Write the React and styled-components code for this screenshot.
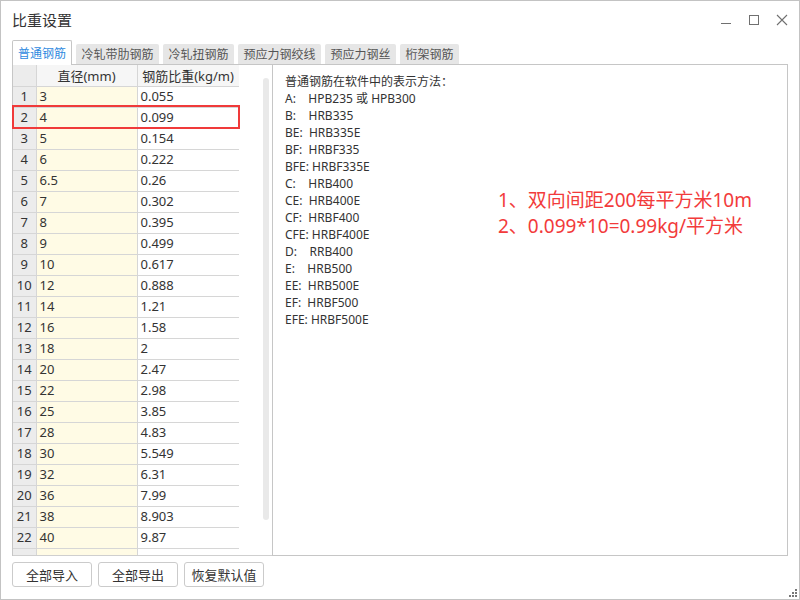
import React from 'react';
import styled, { createGlobalStyle } from 'styled-components';

const GlobalStyle = createGlobalStyle`
  html, body {
    margin: 0;
    padding: 0;
    background: #ffffff;
  }
  * {
    box-sizing: border-box;
  }
`;

const FONT = `"Noto Sans", "Noto Sans CJK SC", sans-serif`;

const Window = styled.div`
  position: relative;
  width: 800px;
  height: 600px;
  border: 1px solid #c3c3c3;
  background: #ffffff;
  font-family: ${FONT};
  color: #333333;
  display: flex;
  flex-direction: column;
`;

const TitleBar = styled.div`
  height: 39px;
  display: flex;
  align-items: center;
  justify-content: space-between;
  padding: 0 10px 2px 11px;
`;

const Title = styled.div`
  font-size: 15px;
  color: #333333;
`;

const Controls = styled.div`
  display: flex;
  align-items: center;
  gap: 13px;
`;

const CtrlBtn = styled.div`
  width: 15px;
  height: 15px;
  display: flex;
  align-items: center;
  justify-content: center;
  color: #707070;
`;

const Body = styled.div`
  flex: 1;
  display: flex;
  flex-direction: column;
  padding: 0 11px;
`;

const TabRow = styled.div`
  height: 24px;
  display: flex;
  align-items: flex-end;
  gap: 4px;
`;

const Tab = styled.div`
  height: ${(p) => (p.$active ? '25px' : '20px')};
  margin-bottom: ${(p) => (p.$active ? '-1px' : '0')};
  padding: 0 ${(p) => (p.$active ? '5px' : '5.5px')};
  display: flex;
  align-items: center;
  font-size: 12px;
  white-space: nowrap;
  position: relative;
  z-index: ${(p) => (p.$active ? 2 : 1)};
  color: ${(p) => (p.$active ? '#2f8ae0' : '#555555')};
  background: ${(p) => (p.$active ? '#ffffff' : '#e6e6e6')};
  border: ${(p) => (p.$active ? '1px solid #c6c6c6' : 'none')};
  border-bottom: none;
  border-radius: 2px 2px 0 0;
`;

const Panel = styled.div`
  position: relative;
  height: 492px;
  border: 1px solid #c6c6c6;
  display: flex;
`;

const LeftPane = styled.div`
  width: 259px;
  display: flex;
  border-bottom: 1px solid #cfcfcf;
  margin-bottom: -1px;
  overflow: hidden;
`;

const TableWrap = styled.div`
  width: 226px;
  height: 100%;
  overflow: hidden;
`;

const Grid = styled.table`
  border-collapse: collapse;
  table-layout: fixed;
  width: 226px;
  font-size: 13px;
  color: #333333;
`;

const Th = styled.th`
  height: 21px;
  padding: 0;
  font-weight: normal;
  text-align: center;
  border: 1px solid #d6d6d6;
  border-top: none;
  background: ${(p) => (p.$num ? '#ececec' : '#f6f6f6')};
  &:first-child {
    border-left: none;
  }
`;

const Td = styled.td`
  height: 21px;
  padding: 0 0 0 ${(p) => (p.$num ? '0' : '3px')};
  line-height: 19px;
  text-align: ${(p) => (p.$num ? 'center' : 'left')};
  border: 1px solid #d6d6d6;
  white-space: nowrap;
  background: ${(p) =>
    p.$num ? '#ececec' : p.$yellow ? '#fffbe5' : '#ffffff'};
  &:first-child {
    border-left: none;
  }
`;

const ScrollTrack = styled.div`
  width: 6px;
  height: 442px;
  margin: 13px 3px 0 auto;
  border-radius: 3px;
  background: #e9e9e9;
`;

const RightPane = styled.div`
  flex: 1;
  border-left: 1px solid #c6c6c6;
  padding: 8px 12px;
`;

const Legend = styled.div`
  font-size: 12px;
  line-height: 17px;
  color: #333333;
  white-space: pre;
`;

const Note = styled.div`
  position: absolute;
  left: 485px;
  top: 122px;
  font-size: 19px;
  line-height: 26px;
  color: #f23b3b;
  white-space: nowrap;
`;

const Highlight = styled.div`
  position: absolute;
  left: -1px;
  top: 40px;
  width: 228px;
  height: 24px;
  border: 2px solid #f03a3a;
`;

const Footer = styled.div`
  display: flex;
  gap: 6px;
  margin-top: 6px;
`;

const Button = styled.button`
  width: 80px;
  height: 25px;
  padding: 0;
  border: 1px solid #cbcbcb;
  border-radius: 3px;
  background: #ffffff;
  font-family: ${FONT};
  font-size: 13px;
  color: #333333;
`;

const Grip = styled.svg`
  position: absolute;
  right: 2px;
  bottom: 2px;
`;

const rows = [
  ['3', '0.055'], ['4', '0.099'], ['5', '0.154'], ['6', '0.222'],
  ['6.5', '0.26'], ['7', '0.302'], ['8', '0.395'], ['9', '0.499'],
  ['10', '0.617'], ['12', '0.888'], ['14', '1.21'], ['16', '1.58'],
  ['18', '2'], ['20', '2.47'], ['22', '2.98'], ['25', '3.85'],
  ['28', '4.83'], ['30', '5.549'], ['32', '6.31'], ['36', '7.99'],
  ['38', '8.903'], ['40', '9.87'],
];

const legend = [
  '普通钢筋在软件中的表示方法：',
  'A:    HPB235 或 HPB300',
  'B:    HRB335',
  'BE:  HRB335E',
  'BF:  HRBF335',
  'BFE: HRBF335E',
  'C:    HRB400',
  'CE:  HRB400E',
  'CF:  HRBF400',
  'CFE: HRBF400E',
  'D:    RRB400',
  'E:    HRB500',
  'EE:  HRB500E',
  'EF:  HRBF500',
  'EFE: HRBF500E',
];

const tabs = ['普通钢筋', '冷轧带肋钢筋', '冷轧扭钢筋', '预应力钢绞线', '预应力钢丝', '桁架钢筋'];

const App = () => {
  return (
    <>
      <GlobalStyle />
      <Window>
        <TitleBar>
          <Title>比重设置</Title>
          <Controls>
            <CtrlBtn>
              <svg width="12" height="12" viewBox="0 0 12 12">
                <line x1="1" y1="9.5" x2="11" y2="9.5" stroke="currentColor" strokeWidth="1" />
              </svg>
            </CtrlBtn>
            <CtrlBtn>
              <svg width="12" height="12" viewBox="0 0 12 12">
                <rect x="1.5" y="1.5" width="9" height="9" fill="none" stroke="currentColor" strokeWidth="1" />
              </svg>
            </CtrlBtn>
            <CtrlBtn>
              <svg width="12" height="12" viewBox="0 0 12 12">
                <path d="M1 1 L11 11 M11 1 L1 11" stroke="currentColor" strokeWidth="1.1" />
              </svg>
            </CtrlBtn>
          </Controls>
        </TitleBar>
        <Body>
          <TabRow>
            {tabs.map((t, i) => (
              <Tab key={t} $active={i === 0}>{t}</Tab>
            ))}
          </TabRow>
          <Panel>
            <LeftPane>
              <TableWrap>
                <Grid>
                  <colgroup>
                    <col style={{ width: 23 }} />
                    <col style={{ width: 101 }} />
                    <col style={{ width: 102 }} />
                  </colgroup>
                  <thead>
                    <tr>
                      <Th $num />
                      <Th>直径(mm)</Th>
                      <Th>钢筋比重(kg/m)</Th>
                    </tr>
                  </thead>
                  <tbody>
                    {rows.map(([d, w], i) => (
                      <tr key={i}>
                        <Td $num>{i + 1}</Td>
                        <Td $yellow>{d}</Td>
                        <Td>{w}</Td>
                      </tr>
                    ))}
                    <tr>
                      <Td $num />
                      <Td $yellow />
                      <Td />
                    </tr>
                  </tbody>
                </Grid>
              </TableWrap>
              <ScrollTrack />
            </LeftPane>
            <RightPane>
              <Legend>
                {legend.map((l) => (
                  <div key={l}>{l}</div>
                ))}
              </Legend>
            </RightPane>
            <Highlight />
            <Note>
              <div>1、双向间距200每平方米10m</div>
              <div>2、0.099*10=0.99kg/平方米</div>
            </Note>
          </Panel>
          <Footer>
            <Button>全部导入</Button>
            <Button>全部导出</Button>
            <Button>恢复默认值</Button>
          </Footer>
        </Body>
        <Grip width="8" height="8" viewBox="0 0 8 8">
          <rect x="6" y="0" width="2" height="2" fill="#777" />
          <rect x="3" y="3" width="2" height="2" fill="#777" />
          <rect x="6" y="3" width="2" height="2" fill="#777" />
          <rect x="0" y="6" width="2" height="2" fill="#777" />
          <rect x="3" y="6" width="2" height="2" fill="#777" />
          <rect x="6" y="6" width="2" height="2" fill="#777" />
        </Grip>
      </Window>
    </>
  );
};

export default App;
